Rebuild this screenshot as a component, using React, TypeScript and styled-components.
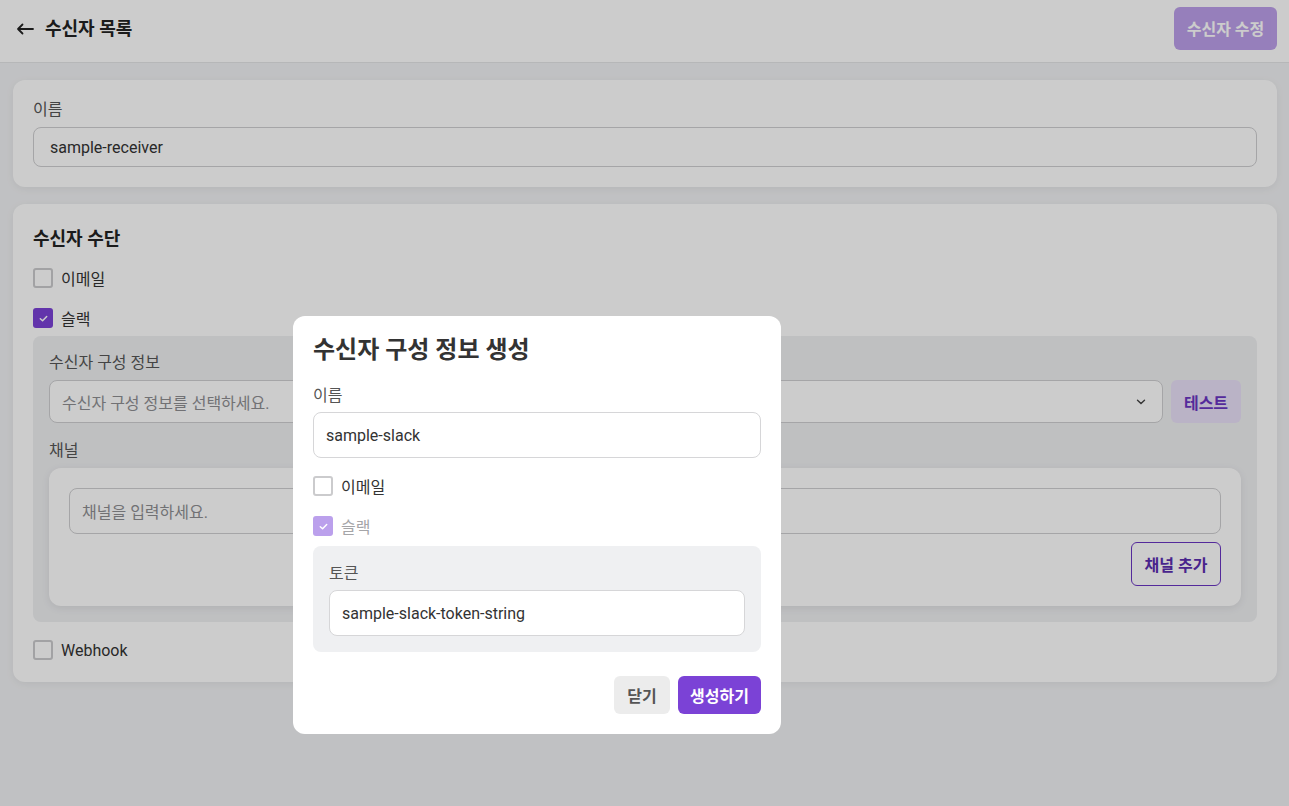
import React from "react";
import styled, { createGlobalStyle } from "styled-components";

const Global = createGlobalStyle`
  * { box-sizing: border-box; }
  html, body { margin: 0; padding: 0; }
  body {
    background: #f1f2f4;
    font-family: Roboto, "Noto Sans CJK KR", sans-serif;
    color: #333;
    height: 806px;
    overflow: hidden;
  }
  button { white-space: nowrap; }
`;

const Page = styled.div`
  min-height: 806px;
  background: #f1f2f4;
`;

const Header = styled.header`
  height: 63px;
  background: #fff;
  border-bottom: 1px solid #e4e5e7;
  display: flex;
  align-items: center;
  justify-content: space-between;
  padding: 0 12px 6px 16px;
`;

const BackLink = styled.div`
  display: flex;
  align-items: center;
  gap: 11px;
  font-size: 18px;
  font-weight: 600;
  color: #222;
  line-height: 1;
  padding-top: 2px;
`;

const PrimaryButton = styled.button<{ $faded?: boolean }>`
  border: none;
  background: #7b42d6;
  color: #fff;
  font-family: inherit;
  font-weight: 700;
  font-size: 16px;
  border-radius: 6px;
  padding: 0 13px;
  height: 43px;
  opacity: ${(p) => (p.$faded ? 0.5 : 1)};
`;

const Main = styled.main`
  padding: 17px 12px 0 13px;
  display: flex;
  flex-direction: column;
  gap: 17px;
`;

const Card = styled.section<{ $pb?: number }>`
  background: #fff;
  border-radius: 12px;
  box-shadow: 0 2px 8px rgba(0, 0, 0, 0.06);
  padding: 20px 20px ${(p) => p.$pb ?? 20}px 20px;
  display: flex;
  flex-direction: column;
`;

const Label = styled.label<{ $mb?: number }>`
  font-size: 16px;
  color: #555;
  line-height: 20px;
  margin-bottom: ${(p) => p.$mb ?? 7}px;
`;

const Input = styled.div<{ $h?: number; $placeholder?: boolean; $soft?: boolean; $pad?: number }>`
  height: ${(p) => p.$h ?? 40}px;
  border: 1px solid ${(p) => (p.$soft ? "#d6d6d8" : "#cfcfd1")};
  border-radius: 8px;
  background: #fff;
  display: flex;
  align-items: center;
  padding: 0 16px 0 ${(p) => p.$pad ?? 12}px;
  font-size: 16px;
  color: ${(p) => (p.$placeholder ? "#8e8e92" : "#333")};
  justify-content: space-between;
`;

const SectionTitle = styled.h2`
  margin: 4px 0 10px;
  font-size: 18px;
  font-weight: 700;
  color: #222;
  line-height: 22px;
`;

const CheckRow = styled.div<{ $disabled?: boolean; $mt?: number; $mb?: number }>`
  display: flex;
  align-items: center;
  gap: 8px;
  height: 36px;
  margin-top: ${(p) => p.$mt ?? 0}px;
  margin-bottom: ${(p) => p.$mb ?? 4}px;
  font-size: 16px;
  color: ${(p) => (p.$disabled ? "#a5a5a8" : "#333")};
`;

const Box = styled.span<{ $checked?: boolean; $disabled?: boolean }>`
  width: 20px;
  height: 20px;
  border-radius: 3px;
  border: ${(p) => (p.$checked ? "none" : "2px solid #cbcbcd")};
  background: ${(p) => (p.$checked ? (p.$disabled ? "#bba0ec" : "#7b42d6") : "#fff")};
  display: flex;
  align-items: center;
  justify-content: center;
  flex-shrink: 0;
`;

const Panel = styled.div<{ $pad?: string; $mt?: number }>`
  background: #eff0f2;
  border-radius: 8px;
  padding: ${(p) => p.$pad ?? "16px"};
  margin-top: ${(p) => p.$mt ?? 0}px;
  display: flex;
  flex-direction: column;
`;

const SelectRow = styled.div`
  display: flex;
  gap: 8px;
  margin-bottom: 18px;
`;

const SoftButton = styled.button`
  border: none;
  background: #e9e0f8;
  color: #6a35c2;
  font-family: inherit;
  font-weight: 700;
  font-size: 16px;
  border-radius: 6px;
  height: 43px;
  width: 70px;
`;

const ChannelCard = styled.div`
  background: #fff;
  border-radius: 12px;
  box-shadow: 0 2px 8px rgba(0, 0, 0, 0.08);
  padding: 20px;
  display: flex;
  flex-direction: column;
  gap: 8px;
`;

const OutlineButton = styled.button`
  align-self: flex-end;
  border: 1px solid #6a35c2;
  background: #fff;
  color: #5a2db0;
  font-family: inherit;
  font-weight: 700;
  font-size: 16px;
  border-radius: 6px;
  height: 44px;
  width: 90px;
`;

const Overlay = styled.div`
  position: fixed;
  inset: 0;
  background: rgba(0, 0, 0, 0.2);
`;

const Modal = styled.div`
  position: fixed;
  left: 293px;
  top: 316px;
  width: 488px;
  background: #fff;
  border-radius: 12px;
  padding: 20px;
  display: flex;
  flex-direction: column;
`;

const ModalTitle = styled.h1`
  margin: 0 0 22px;
  font-size: 24px;
  font-weight: 700;
  color: #333;
  line-height: 28px;
`;

const Footer = styled.div`
  display: flex;
  justify-content: flex-end;
  gap: 8px;
  margin-top: 24px;
`;

const GhostButton = styled.button`
  border: none;
  background: #ececec;
  color: #555;
  font-family: inherit;
  font-weight: 700;
  font-size: 16px;
  border-radius: 6px;
  height: 38px;
  width: 56px;
`;

const SmallPrimary = styled(PrimaryButton)`
  height: 38px;
  width: 83px;
  padding: 0;
`;

const HeaderButton = styled(PrimaryButton)`
  padding: 0;
  width: 103px;
`;

const Chevron = styled.svg`
  flex-shrink: 0;
`;

const Check = ({ color = "#fff" }: { color?: string }) => (
  <svg width="11" height="11" viewBox="0 0 12 12">
    <path d="M2.5 6.2 L5 8.5 L9.5 3.8" stroke={color} strokeWidth="1.6" fill="none" strokeLinecap="round" strokeLinejoin="round" />
  </svg>
);

export default function App() {
  return (
    <>
      <Global />
      <Page>
        <Header>
          <BackLink>
            <svg width="18" height="12" viewBox="0 0 18 12">
              <path d="M17 6H2 M6.5 1.5 L2 6 L6.5 10.5" stroke="#222" strokeWidth="1.8" fill="none" strokeLinecap="round" strokeLinejoin="round" />
            </svg>
            수신자 목록
          </BackLink>
          <HeaderButton $faded>수신자 수정</HeaderButton>
        </Header>
        <Main>
          <Card>
            <Label $mb={7}>이름</Label>
            <Input $pad={16}>sample-receiver</Input>
          </Card>
          <Card $pb={14}>
            <SectionTitle>수신자 수단</SectionTitle>
            <CheckRow>
              <Box />
              이메일
            </CheckRow>
            <CheckRow $mb={0}>
              <Box $checked>
                <Check />
              </Box>
              슬랙
            </CheckRow>
            <Panel $pad="17px 16px 16px 16px">
              <Label $mb={7}>수신자 구성 정보</Label>
              <SelectRow>
                <Input $h={43} $placeholder style={{ flex: 1 }}>
                  수신자 구성 정보를 선택하세요.
                  <Chevron width="10" height="6" viewBox="0 0 10 6">
                    <path d="M1.5 1.2 L5 4.5 L8.5 1.2" stroke="#444" strokeWidth="1.4" fill="none" strokeLinecap="round" />
                  </Chevron>
                </Input>
                <SoftButton>테스트</SoftButton>
              </SelectRow>
              <Label $mb={7}>채널</Label>
              <ChannelCard>
                <Input $h={46} $placeholder>채널을 입력하세요.</Input>
                <OutlineButton>채널 추가</OutlineButton>
              </ChannelCard>
            </Panel>
            <CheckRow $mt={10} $mb={0}>
              <Box />
              Webhook
            </CheckRow>
          </Card>
        </Main>
      </Page>
      <Overlay />
      <Modal>
        <ModalTitle>수신자 구성 정보 생성</ModalTitle>
        <Label $mb={6}>이름</Label>
        <Input $h={46} $soft>sample-slack</Input>
        <CheckRow $mt={10}>
          <Box />
          이메일
        </CheckRow>
        <CheckRow $disabled $mb={0}>
          <Box $checked $disabled>
            <Check />
          </Box>
          슬랙
        </CheckRow>
        <Panel $pad="18px 16px 16px 16px" $mt={2}>
          <Label $mb={6}>토큰</Label>
          <Input $h={46} $soft>sample-slack-token-string</Input>
        </Panel>
        <Footer>
          <GhostButton>닫기</GhostButton>
          <SmallPrimary>생성하기</SmallPrimary>
        </Footer>
      </Modal>
    </>
  );
}
